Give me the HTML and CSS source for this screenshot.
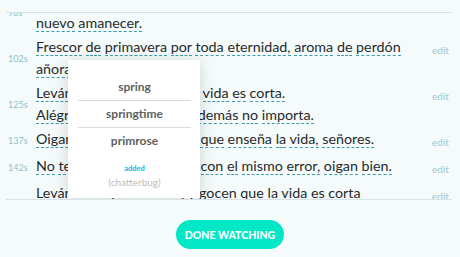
FILE: index.html
```html
<!DOCTYPE html>
<html lang="es">
<head>
  <meta charset="UTF-8" />
  <meta name="viewport" content="width=device-width, initial-scale=1.0"/>
  <title>Transcript</title>
  <link rel="stylesheet" href="styles.css">
</head>
<body>
  <div class="transcript">
    <div class="lines">
      <div class="segment">
        <div class="time">98s</div>
        <div class="text">
          <span class="w">Levántate</span> <span class="w">con</span> <span class="w">el</span> <span class="w">sol</span> <span class="w">y</span> <span class="w">celebra</span> <span class="w">un</span><br>
          <span class="w">nuevo</span> <span class="w">amanecer.</span>
        </div>
        <div class="edit">edit</div>
      </div>

      <div class="segment">
        <div class="time">102s</div>
        <div class="text">
          <span class="w">Frescor</span> <span class="w">de</span> <span class="w">primavera</span> <span class="w">por</span> <span class="w">toda</span> <span class="w">eternidad,</span> <span class="w">aroma</span> <span class="w">de</span> <span class="w">perdón</span><br>
          <span class="w">añoranza.</span>
        </div>
        <div class="edit">edit</div>
      </div>

      <div class="segment">
        <div class="time">125s</div>
        <div class="text">
          <span class="w">Levántense</span> <span class="w">(levántense)</span> <span class="w">la</span> <span class="w">vida</span> <span class="w">es</span> <span class="w">corta.</span><br>
          <span class="w">Alégrense</span> <span class="w">(alégrense)</span> <span class="w">y</span> <span class="w">lo</span> <span class="w">demás</span> <span class="w">no</span> <span class="w">importa.</span>
        </div>
        <div class="edit">edit</div>
      </div>

      <div class="segment">
        <div class="time">137s</div>
        <div class="text">
          <span class="w">Oigan</span> <span class="w">(oigan)</span> <span class="w">bien</span> <span class="w">todo</span> <span class="w">lo</span> <span class="w">que</span> <span class="w">enseña</span> <span class="w">la</span> <span class="w">vida,</span> <span class="w">señores.</span>
        </div>
        <div class="edit">edit</div>
      </div>

      <div class="segment">
        <div class="time">142s</div>
        <div class="text">
          <span class="w">No</span> <span class="w">te</span> <span class="w">tropieces</span> <span class="w">dos</span> <span class="w">veces</span> <span class="w">con</span> <span class="w">el</span> <span class="w">mismo</span> <span class="w">error,</span> <span class="w">oigan</span> <span class="w">bien.</span>
        </div>
        <div class="edit">edit</div>
      </div>

      <div class="segment">
        <div class="time"></div>
        <div class="text">Levántense (levántense) y gocen que la vida es corta</div>
        <div class="edit">edit</div>
      </div>
    </div>

    <div class="popup">
      <div class="option">spring</div>
      <div class="option">springtime</div>
      <div class="option">primrose</div>
      <div class="added">added</div>
      <div class="source">(chatterbug)</div>
    </div>
  </div>

  <div class="actions">
    <button class="done">DONE WATCHING</button>
  </div>
</body>
</html>
```

FILE: styles.css
```css
body {
  font-family: Lato, "Open Sans", sans-serif;
  margin: 0;
  padding: 0;
  background-color: #f5fbfb;
  color: #262a2c;
}

.transcript {
  position: relative;
  margin: 12px 8px 0 6px;
  height: 186px;
  border-top: 1px solid #d6e4e8;
  border-bottom: 1px solid #d6e4e8;
  overflow: hidden;
}

.lines {
  margin-top: -23px;
}

.segment {
  display: grid;
  grid-template-columns: 30px 1fr 20px;
  margin-bottom: 2px;
}

.time {
  align-self: center;
  padding-left: 2px;
  font-size: 9px;
  color: #8cc2cb;
}

.text {
  font-size: 14.3px;
  line-height: 22px;
}

.w {
  border-bottom: 1px dashed #3d9cae;
}

.edit {
  padding-top: 3px;
  font-size: 10px;
  line-height: 22px;
  color: #9cc8d0;
}

.popup {
  position: absolute;
  left: 62px;
  top: 47px;
  width: 132px;
  height: 138px;
  box-sizing: border-box;
  padding: 14px 9px 0 10px;
  background: #fff;
  box-shadow: 0 2px 14px rgba(0,0,0,0.16);
  text-align: center;
}

.option {
  height: 26px;
  line-height: 26px;
  font-size: 12px;
  font-weight: bold;
  color: #5d5f61;
  border-bottom: 1px solid #dcdcdc;
}

.option:nth-child(3) {
  border-bottom: none;
}

.added {
  margin-top: 10px;
  font-size: 7.5px;
  font-weight: 900;
  color: #1db8e6;
}

.source {
  margin-top: 3px;
  font-size: 10px;
  color: #bcbcbc;
}

.actions {
  display: flex;
  justify-content: center;
  margin-top: 20px;
}

.done {
  width: 108px;
  height: 29px;
  border: none;
  border-radius: 15px;
  background-color: #02e8c6;
  color: #fff;
  font-family: Lato, sans-serif;
  font-size: 10.5px;
  font-weight: 900;
  padding: 0;
  cursor: pointer;
}
```
